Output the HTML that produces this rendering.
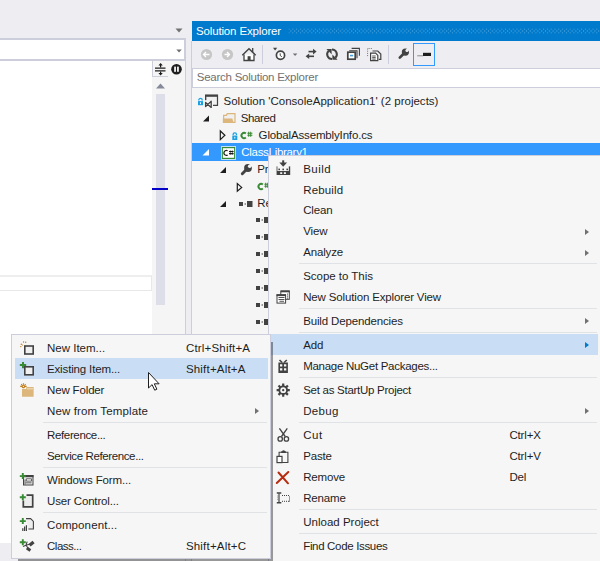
<!DOCTYPE html>
<html><head><meta charset="utf-8">
<style>
*{margin:0;padding:0;box-sizing:border-box}
html,body{width:600px;height:561px;overflow:hidden;background:#EEEEF2;font-family:"Liberation Sans",sans-serif;font-size:11.5px;color:#1E1E1E;letter-spacing:-0.15px}
body{position:relative}
.a{position:absolute}
.t{position:absolute;white-space:pre;line-height:14px}
svg{position:absolute;overflow:visible}
.menu{position:absolute;background:#F6F6F6;border:1px solid #CCCEDB;padding-top:1.56px}
.it{position:relative;height:20.97px}
.it.hl:before{content:"";position:absolute;left:3px;right:2px;top:0;bottom:0;background:#C9DEF5}
.it .tx{position:absolute;top:0;white-space:pre;line-height:22px}
.rmn .it.hl:before{left:1px}
.tx{margin-left:0.5px}
.sep{position:relative;height:2.96px}
.it.hl .arr{border-left-color:#007ACC}
.sep:after{content:"";position:absolute;top:1px;left:var(--sl);right:var(--sr);height:1px;background:#E0E3E6}
.arr{position:absolute;width:0;height:0;border-top:3.3px solid transparent;border-bottom:3.3px solid transparent;border-left:4.5px solid #717171}
</style></head><body>

<!-- LEFT PANEL -->
<div class="a" style="left:0;top:38px;width:185px;height:23px;background:#fff;border-top:2px solid #CCCEDB;border-bottom:2px solid #CCCEDB;border-right:1px solid #CCCEDB"></div>
<div class="a" style="left:0;top:61px;width:152px;height:482px;background:#fff"></div>
<div class="a" style="left:152px;top:61px;width:33px;height:482px;background:#F5F5F5"></div>
<div class="a" style="left:185px;top:38px;width:1px;height:523px;background:#CCCEDB"></div>
<!-- top dropdown arrows -->
<svg style="left:0;top:0" width="1" height="1"><path d="M175.5 28.5h7l-3.5 4z" fill="#717171"/><path d="M176.3 49.5h5.5l-2.75 3z" fill="#717171"/></svg>
<!-- split button box -->
<div class="a" style="left:152px;top:61px;width:16px;height:16px;border-left:1px solid #CCCEDB;border-bottom:1px solid #CCCEDB;background:#F5F5F5"></div>
<svg style="left:0;top:0" width="1" height="1">
 <path d="M155 68.2h10.5M155 70.8h10.5" stroke="#1E1E1E" stroke-width="1.2"/>
 <path d="M160.6 64v3.5M160.6 71.5v3" stroke="#1E1E1E" stroke-width="1.2"/>
 <path d="M158.4 65.5l2.2-2.5 2.2 2.5zM158.4 73l2.2 2.5 2.2-2.5z" fill="#1E1E1E"/>
 <circle cx="176.5" cy="69.2" r="5.3" fill="#1E1E1E"/>
 <rect x="174.2" y="66.6" width="1.7" height="5.2" fill="#fff"/><rect x="177.1" y="66.6" width="1.7" height="5.2" fill="#fff"/>
 <path d="M156 88.5l4.5-5 4.5 5z" fill="#868999"/>
</svg>
<!-- scroll track -->
<div class="a" style="left:156px;top:94px;width:9px;height:211px;background:#DDDEE7"></div>
<div class="a" style="left:152px;top:188px;width:16px;height:2px;background:#0000C8"></div>
<!-- faint box -->
<div class="a" style="left:0;top:275px;width:152px;height:15.5px;border:1px solid #E8E8E8;border-top:2px solid #EEEEEE;border-left:none"></div>

<!-- SOLUTION EXPLORER -->
<div class="a" style="left:191px;top:41px;width:1px;height:520px;background:#CCCEDB"></div>
<div class="a" style="left:192px;top:21px;width:408px;height:20px;background:#007ACC"></div>
<svg style="left:0;top:0" width="1" height="1">
 <defs><pattern id="dots" x="288.5" y="28.5" width="3.8" height="4" patternUnits="userSpaceOnUse">
  <rect x="0" y="0" width="1" height="1" fill="#fff" opacity="0.4"/><rect x="1.9" y="2" width="1" height="1" fill="#fff" opacity="0.4"/>
 </pattern></defs>
 <rect x="288.5" y="28.5" width="312" height="5" fill="url(#dots)"/>
</svg>
<div class="t" style="left:196px;top:24px;color:#fff">Solution Explorer</div>
<!-- search box -->
<div class="a" style="left:192px;top:68px;width:408px;height:20px;background:#fff;border:1px solid #CCCEDB;border-right:none"></div>
<div class="t" style="left:196.8px;top:70px;color:#717171;letter-spacing:-0.25px">Search Solution Explorer</div>
<!-- tree bg -->
<div class="a" style="left:192px;top:88px;width:408px;height:473px;background:#F5F5F5"></div>
<div class="a" style="left:192px;top:143px;width:408px;height:18px;background:#3399FF"></div>

<svg style="left:0;top:0" width="600" height="561">
 <!-- solution -->
 <path d="M198.8 100.6v-0.5a1.7 1.7 0 0 1 3.4 0v0.5" stroke="#1BA1E2" stroke-width="1.3" fill="none"/>
 <rect x="198" y="101.1" width="5" height="4.1" fill="#1BA1E2"/><rect x="200.05" y="102.3" width="0.9" height="1.8" fill="#fff"/>
 <path d="M205.6 101V95.4h11.9v10h-4.5" stroke="#424242" stroke-width="1.2" fill="#F0F0F0"/>
 <rect x="205" y="94.6" width="13" height="2.2" fill="#424242"/>
 <rect x="204.6" y="100.2" width="8.4" height="8" fill="#F5F5F5"/><path d="M205.6 102.4V106.6L211.2 101.2V107.4Z" stroke="#424242" stroke-width="1.3" fill="none" stroke-linejoin="round"/><path d="M205.6 97v3" stroke="#424242" stroke-width="1.2"/>
 <!-- shared -->
 <path d="M203 121.5h6v-6z" fill="#1E1E1E"/>
 <path d="M223.6 122.4V115.3H226.3L227.3 113.6H235V122.4Z" stroke="#DCB67A" stroke-width="1.2" fill="#F0EFF1"/>
 <path d="M222.8 118.4H232.3L233.6 122.9H222.8Z" fill="#DCB67A"/>
 <!-- global --><path d="M245.84 133.57A2.6 2.6 0 1 0 245.84 137.43" stroke="#388A34" stroke-width="1.9" fill="none"/><path d="M248.70 131.80v5M250.70 131.80v5M247.39999999999998 133.30h5M247.39999999999998 135.30h5" stroke="#388A34" stroke-width="1.05"/>
 <path d="M220.3 131v8.6l4.6-4.3z" stroke="#1E1E1E" stroke-width="1.2" fill="none"/>
 <path d="M233.1 135v-0.5a1.7 1.7 0 0 1 3.4 0v0.5" stroke="#1BA1E2" stroke-width="1.3" fill="none"/>
 <rect x="232.3" y="135.5" width="5" height="4.5" fill="#1BA1E2"/><rect x="234.35" y="136.8" width="0.9" height="1.8" fill="#fff"/>
 <!-- classlibrary -->
 <path d="M202.5 155.5h6.5v-6.5z" fill="#fff"/>
 <rect x="221" y="146.3" width="15" height="13.4" fill="#fff"/>
 <rect x="222.3" y="147.6" width="12.4" height="10.8" stroke="#388A34" stroke-width="1.2" fill="#fff"/><path d="M227.6 150.7A2.5 2.5 0 1 0 227.6 155.1" stroke="#1E1E1E" stroke-width="1.3" fill="none"/><path d="M229 151.5h4.6M229 153.6h4.6" stroke="#1E1E1E" stroke-width="1.2"/><path d="M230.3 150.4v4.4M232.3 150.4v4.4" stroke="#1E1E1E" stroke-width="0.7"/>
 <!-- properties -->
 <path d="M220 173h6v-6z" fill="#1E1E1E"/>
  <path d="M247.2 168.8l-4.9 4.9" stroke="#424242" stroke-width="2.9" stroke-linecap="round"/>
 <circle cx="248" cy="168" r="3.9" fill="#424242"/>
 <circle cx="249.7" cy="166.3" r="1.8" fill="#F5F5F5"/>
 <path d="M249.7 166.3l3.5 -3.5" stroke="#F5F5F5" stroke-width="2.6"/>
 <!-- assemblyinfo --><path d="M262.84 184.57A2.6 2.6 0 1 0 262.84 188.43" stroke="#388A34" stroke-width="1.9" fill="none"/><path d="M265.70 182.80v5M267.70 182.80v5M264.4 184.30h5M264.4 186.30h5" stroke="#388A34" stroke-width="1.05"/>
 <path d="M237.3 183.6v7.6l4.4-3.8z" stroke="#1E1E1E" stroke-width="1.2" fill="none"/>
 <!-- references -->
 <path d="M220 207h6v-6z" fill="#1E1E1E"/>
 <rect x="239" y="202" width="4" height="4" fill="#424242"/><rect x="244.5" y="203.5" width="1.5" height="1" fill="#424242"/><rect x="247" y="201" width="5.5" height="6" fill="#424242"/>
 <rect x="256" y="218" width="4" height="4" fill="#424242"/><rect x="261.5" y="219.5" width="1.5" height="1" fill="#424242"/><rect x="264" y="217" width="5" height="6" fill="#424242"/><rect x="256" y="235" width="4" height="4" fill="#424242"/><rect x="261.5" y="236.5" width="1.5" height="1" fill="#424242"/><rect x="264" y="234" width="5" height="6" fill="#424242"/><rect x="256" y="252" width="4" height="4" fill="#424242"/><rect x="261.5" y="253.5" width="1.5" height="1" fill="#424242"/><rect x="264" y="251" width="5" height="6" fill="#424242"/><rect x="256" y="269" width="4" height="4" fill="#424242"/><rect x="261.5" y="270.5" width="1.5" height="1" fill="#424242"/><rect x="264" y="268" width="5" height="6" fill="#424242"/><rect x="256" y="286" width="4" height="4" fill="#424242"/><rect x="261.5" y="287.5" width="1.5" height="1" fill="#424242"/><rect x="264" y="285" width="5" height="6" fill="#424242"/><rect x="256" y="303" width="4" height="4" fill="#424242"/><rect x="261.5" y="304.5" width="1.5" height="1" fill="#424242"/><rect x="264" y="302" width="5" height="6" fill="#424242"/><rect x="256" y="320" width="4" height="4" fill="#424242"/><rect x="261.5" y="321.5" width="1.5" height="1" fill="#424242"/><rect x="264" y="319" width="5" height="6" fill="#424242"/>
</svg>
<div class="t" style="left:223.5px;top:94px;letter-spacing:0.005px">Solution 'ConsoleApplication1' (2 projects)</div>
<div class="t" style="left:240.8px;top:111px;letter-spacing:-0.4px">Shared</div>
<div class="t" style="left:258.6px;top:128px">GlobalAssemblyInfo.cs</div>
<div class="t" style="left:241.3px;top:145px;color:#fff;letter-spacing:-0.3px">ClassLibrary1</div>
<div class="t" style="left:257.3px;top:162px">Properties</div>
<div class="t" style="left:257.3px;top:196px">References</div>


<svg style="left:0;top:0" width="600" height="561">
 <circle cx="206.5" cy="54.5" r="5.6" fill="#C6C6C6"/>
 <path d="M209.5 54.5h-5.5M206 52l-2.5 2.5 2.5 2.5" stroke="#fff" stroke-width="1.3" fill="none"/>
 <circle cx="227.5" cy="54.5" r="5.6" fill="#C6C6C6"/>
 <path d="M224.5 54.5h5.5M227 52l2.5 2.5-2.5 2.5" stroke="#fff" stroke-width="1.3" fill="none"/>
 <path d="M244 54.5v6h10v-6" stroke="#424242" stroke-width="1.3" fill="#fff"/>
 <path d="M242.3 55.3l6.7-6.6 6.7 6.6" stroke="#424242" stroke-width="1.4" fill="none"/>
 <path d="M252.7 48v4" stroke="#424242" stroke-width="1.3"/>
 <rect x="247.6" y="56.2" width="3" height="4.8" fill="#424242"/>
 <rect x="262" y="45" width="1" height="19" fill="#CCCEDB"/>
 <circle cx="280.5" cy="55.2" r="4.1" stroke="#424242" stroke-width="1.7" fill="#fff"/>
 <path d="M280.2 53.3v2.2l1.6 1.2" stroke="#424242" stroke-width="1" fill="none"/>
 <path d="M273 47.8h4.2l-2.1 2.6z" fill="#424242"/>
 <path d="M292.8 53.5h4.6l-2.3 2.6z" fill="#717171"/>
 <path d="M308.5 51.6h6.5" stroke="#424242" stroke-width="1.6"/>
 <path d="M313 48.8l3.6 2.8-3.6 2.8z" fill="#424242"/>
 <path d="M307.5 56.3h6.5" stroke="#424242" stroke-width="1.6"/>
 <path d="M309.2 53.5l-3.6 2.8 3.6 2.8z" fill="#424242"/>
  <path d="M332 59.1A4.8 4.8 0 0 1 328.6 50.9" stroke="#424242" stroke-width="2" fill="none"/>
 <path d="M326.4 49h5.2v5.2z" fill="#424242"/>
 <path d="M332 49.5A4.8 4.8 0 0 1 335.4 57.7" stroke="#424242" stroke-width="2" fill="none"/>
 <path d="M337.6 59.7h-5.2v-5.2z" fill="#424242"/>
<path d="M351.6 48.4h7.8v7.4" stroke="#424242" stroke-width="1.1" fill="none"/>
 <path d="M349.2 50.8h7.8v7.4" stroke="#424242" stroke-width="1.1" fill="none"/>
 <rect x="347.8" y="52.2" width="7.4" height="7" stroke="#424242" stroke-width="1.7" fill="#fff"/>
 <rect x="350" y="54.8" width="3.2" height="1.6" fill="#4A9BD9"/>
 <path d="M367.6 48.5v8" stroke="#717171" stroke-width="1" stroke-dasharray="1 1.2"/>
 <path d="M368.6 48.5h4" stroke="#717171" stroke-width="1" stroke-dasharray="1 1.2"/>
 <path d="M372.5 51h5.3l3 3v5.4h-2" stroke="#424242" stroke-width="1.2" fill="none"/>
 <path d="M370.6 53.2h5l2.2 2.2v5.3h-7.2z" stroke="#424242" stroke-width="1.2" fill="#fff"/>
 <path d="M372.2 56h3.5M372.2 57.6h3.5M372.2 59.1h3.5" stroke="#424242" stroke-width="0.9"/>
 <rect x="388" y="45" width="1" height="19" fill="#CCCEDB"/>
  <path d="M404.6 52.8l-4.8 4.8" stroke="#424242" stroke-width="2.7" stroke-linecap="round"/>
 <circle cx="405.4" cy="52.1" r="3.6" fill="#424242"/>
 <circle cx="407" cy="50.5" r="1.6" fill="#EEEEF2"/>
 <path d="M407 50.5l3 -3" stroke="#EEEEF2" stroke-width="2.4"/>
<rect x="413.5" y="43.5" width="21" height="22" stroke="#3399FF" stroke-width="1" fill="#EEEEF2"/>
 <rect x="417.2" y="55.3" width="6" height="1" fill="#8A8A8A"/>
 <rect x="423" y="52.8" width="8" height="3.2" fill="#1E1E1E"/>
</svg>

<div class="menu rmn" style="left:268px;top:155px;width:333px;height:420px;--sl:30px;--sr:3px">
<div class="it"><span class="tx" style="left:33.7px;letter-spacing:0.45px">Build</span></div>
<div class="it"><span class="tx" style="left:33.7px;letter-spacing:0.15px">Rebuild</span></div>
<div class="it"><span class="tx" style="left:33.7px">Clean</span></div>
<div class="it"><span class="tx" style="left:33.7px">View</span><span class="arr" style="left:316.4px;top:8.2px"></span></div>
<div class="it"><span class="tx" style="left:33.7px">Analyze</span><span class="arr" style="left:316.4px;top:8.2px"></span></div>
<div class="sep"></div>
<div class="it"><span class="tx" style="left:33.7px;letter-spacing:-0.03px">Scope to This</span></div>
<div class="it"><span class="tx" style="left:33.7px">New Solution Explorer View</span></div>
<div class="sep"></div>
<div class="it"><span class="tx" style="left:33.7px">Build Dependencies</span><span class="arr" style="left:316.4px;top:8.2px"></span></div>
<div class="sep"></div>
<div class="it hl"><span class="tx" style="left:33.7px">Add</span><span class="arr" style="left:316.4px;top:8.2px"></span></div>
<div class="it"><span class="tx" style="left:33.7px;letter-spacing:-0.28px">Manage NuGet Packages...</span></div>
<div class="sep"></div>
<div class="it"><span class="tx" style="left:33.7px;letter-spacing:-0.27px">Set as StartUp Project</span></div>
<div class="it"><span class="tx" style="left:33.7px;letter-spacing:0.32px">Debug</span><span class="arr" style="left:316.4px;top:8.2px"></span></div>
<div class="sep"></div>
<div class="it"><span class="tx" style="left:33.7px;letter-spacing:0.6px">Cut</span><span class="tx" style="left:239.9px">Ctrl+X</span></div>
<div class="it"><span class="tx" style="left:33.7px">Paste</span><span class="tx" style="left:239.9px">Ctrl+V</span></div>
<div class="it"><span class="tx" style="left:33.7px">Remove</span><span class="tx" style="left:239.9px">Del</span></div>
<div class="it"><span class="tx" style="left:33.7px">Rename</span></div>
<div class="sep"></div>
<div class="it"><span class="tx" style="left:33.7px;letter-spacing:0.01px">Unload Project</span></div>
<div class="sep"></div>
<div class="it"><span class="tx" style="left:33.7px;letter-spacing:-0.33px">Find Code Issues</span></div>
</div>
<svg style="left:0;top:0" width="600" height="561">
 <!-- build -->
 <path d="M283.2 160.3v3.5" stroke="#424242" stroke-width="2"/>
 <path d="M279.3 162.6h7.8l-3.9 4.2z" fill="#424242"/>
 <rect x="276.3" y="166.4" width="1.4" height="8.6" fill="#8C8C8C"/>
 <rect x="288.8" y="166.4" width="1.4" height="8.6" fill="#424242"/>
 <rect x="278.4" y="168.6" width="1.6" height="1.6" fill="#424242"/><rect x="282.4" y="168.6" width="1.6" height="1.6" fill="#424242"/><rect x="286.4" y="168.6" width="1.6" height="1.6" fill="#424242"/>
 <path d="M277 171h13v4h-13z M280.2 172.3v1.8h2v-1.8z M283.9 172.3v1.8h2v-1.8z" fill="#424242" fill-rule="evenodd"/>
 <!-- new SE view -->
 <rect x="280.8" y="291" width="8.5" height="8.3" stroke="#424242" stroke-width="1" fill="#fff"/>
 <rect x="280.8" y="290.5" width="8.8" height="1.8" fill="#424242"/>
 <rect x="287" y="293.6" width="1" height="1" fill="#424242"/><rect x="287" y="295.6" width="1" height="1" fill="#424242"/><rect x="287" y="297.6" width="1" height="1" fill="#424242"/>
 <rect x="277" y="294.8" width="8.6" height="8.3" stroke="#424242" stroke-width="1" fill="#fff"/>
 <rect x="276.5" y="294.3" width="9.5" height="1.8" fill="#424242"/>
 <path d="M278.5 297.5h6M278.5 299.5h6M279.5 301.3h4.5" stroke="#424242" stroke-width="0.9"/>
 <!-- nuget -->
 <path d="M278.4 362.5h9.5v10.5h-9.5z M280 364.3v2.2h2.3v-2.2z M284 364.3v2.2h2.3v-2.2z M280 368.2v2.2h2.3v-2.2z M284 368.2v2.2h2.3v-2.2z" fill="#424242" fill-rule="evenodd"/>
 <path d="M279.5 360l2.7 2.5M286.8 360l-2.7 2.5" stroke="#424242" stroke-width="1.6"/>
 <!-- gear -->
 <g transform="translate(283.2 390.2)">
  <path d="M0 -6.6v13.2M-6.6 0h13.2M-4.7 -4.7l9.4 9.4M4.7 -4.7l-9.4 9.4" stroke="#424242" stroke-width="2.2"/>
  <circle r="4.8" fill="#424242"/><circle r="2.9" fill="#F6F6F6"/><circle r="1.15" fill="#424242"/>
 </g>
 <!-- cut -->
 <path d="M279.4 428.3l5.8 8.2M287.3 428.3l-5.8 8.2" stroke="#424242" stroke-width="1.3"/>
 <circle cx="280.2" cy="438.9" r="2.2" stroke="#424242" stroke-width="1.3" fill="none"/>
 <circle cx="286.4" cy="438.9" r="2.2" stroke="#424242" stroke-width="1.3" fill="none"/>
 <!-- paste -->
  <path d="M279.1 456v-3.7h8.8v10.2h-5.8" stroke="#424242" stroke-width="1.1" fill="none"/>
 <path d="M281.2 452.9v-1.6h0.9a1.5 1.5 0 0 1 2.9 0h0.9v1.6z" fill="#424242"/>
 <rect x="277" y="456.4" width="5" height="6.2" stroke="#424242" stroke-width="1.2" fill="#fff"/>
 <!-- remove -->
 <path d="M276.8 483l11.5-11M278.5 472.5l9.5 10.8" stroke="#B72B0E" stroke-width="2" stroke-linecap="round"/>
 <!-- rename -->
 <path d="M279 493.5v9" stroke="#424242" stroke-width="1.2"/>
 <path d="M276.8 493h4.5M276.8 502.8h4.5" stroke="#424242" stroke-width="1.4"/>
 <path d="M282 495.5h8M289.5 496.5v5M282 501.3h8" stroke="#424242" stroke-width="1" stroke-dasharray="1 1"/>
 <path d="M277 496h1M277 497.8h1M277 499.6h1" stroke="#8C8C8C" stroke-width="0.8"/>
</svg>

<div class="a" style="left:18px;top:342px;width:255px;height:220px;background:rgba(0,0,0,0.38);filter:blur(0.4px)"></div>
<div class="menu" style="left:11px;top:334.4px;width:260px;height:225px;--sl:30.8px;--sr:3px">
<div class="it"><span class="tx" style="left:34.5px;letter-spacing:0.0px">New Item...</span><span class="tx" style="left:173.4px;letter-spacing:0.19px">Ctrl+Shift+A</span></div>
<div class="it hl"><span class="tx" style="left:34.5px">Existing Item...</span><span class="tx" style="left:173.4px;letter-spacing:0.2px">Shift+Alt+A</span></div>
<div class="it"><span class="tx" style="left:34.5px">New Folder</span></div>
<div class="it"><span class="tx" style="left:34.5px;letter-spacing:0.13px">New from Template</span><span class="arr" style="left:243px;top:8.2px"></span></div>
<div class="sep"></div>
<div class="it"><span class="tx" style="left:34.5px;letter-spacing:-0.35px">Reference...</span></div>
<div class="it"><span class="tx" style="left:34.5px;letter-spacing:-0.38px">Service Reference...</span></div>
<div class="sep"></div>
<div class="it"><span class="tx" style="left:34.5px">Windows Form...</span></div>
<div class="it"><span class="tx" style="left:34.5px">User Control...</span></div>
<div class="sep"></div>
<div class="it"><span class="tx" style="left:34.5px;letter-spacing:0.11px">Component...</span></div>
<div class="it"><span class="tx" style="left:34.5px;letter-spacing:-0.48px">Class...</span><span class="tx" style="left:173.4px;letter-spacing:0.2px">Shift+Alt+C</span></div>
</div>
<svg style="left:0;top:0" width="600" height="561">
 <!-- new item -->
 <rect x="24.8" y="346" width="8.4" height="8" stroke="#424242" stroke-width="1.6" fill="#F0F0F0"/>
 <circle cx="21.3" cy="344.2" r="0.7" fill="#C27D1A"/><circle cx="23.5" cy="342" r="0.7" fill="#C27D1A"/><circle cx="25.7" cy="342.3" r="0.7" fill="#C27D1A"/><circle cx="20.8" cy="346.6" r="0.7" fill="#C27D1A"/><circle cx="22.5" cy="345" r="0.6" fill="#C27D1A"/>
 <!-- existing item -->
 <rect x="24.8" y="366.8" width="8.4" height="8" stroke="#424242" stroke-width="1.6" fill="#F0F0F0"/>
 <path d="M19.8 365.1h6.4M23 361.9v6.4" stroke="#388A34" stroke-width="2"/>
 <!-- new folder -->
 <path d="M22 389h11.6v7.8h-11.6z" fill="#DCB67A"/>
 <path d="M26.2 387h7.4v2h-7.4z" fill="#DCB67A"/>
 <rect x="27" y="388.4" width="6" height="0.9" fill="#F3E6CC"/>
 <g transform="translate(23.4 386.4)" stroke="#C27D1A" stroke-width="1.1">
  <path d="M-3.2 0h6.4M0 -3.2v1.5M-2.2 -2.2l0.8 0.8M2.2 -2.2l-0.8 0.8"/>
  <circle r="1.2" fill="#F6F6F6"/>
 </g>
 <!-- windows form -->
 <rect x="23.5" y="475.5" width="9.5" height="9.5" stroke="#424242" stroke-width="1" fill="#E8E8E8"/>
 <rect x="24" y="475" width="9.5" height="2.2" fill="#424242"/>
 <path d="M26.3 478.8h5.2v2.3h-5.2z" stroke="#424242" stroke-width="0.8" fill="#fff"/>
 <path d="M25.5 482.8h6M25 479.5v5" stroke="#424242" stroke-width="0.8"/>
 <path d="M19.8 476.1h6M22.8 473.1v6" stroke="#388A34" stroke-width="1.9"/>
 <!-- user control -->
 <path d="M26.5 495.2h6.2v11.6h-9.4v-6.2" stroke="#424242" stroke-width="1.7" fill="#EDEDED"/>
 <path d="M19.8 497.2h6M22.8 494.2v6" stroke="#388A34" stroke-width="1.9"/>
 <!-- component -->
 <path d="M26 518.6h4.6l2.8 2.8v7.6h-5" stroke="#424242" stroke-width="1.1" fill="#EDEDED"/>
 <rect x="22.2" y="528.2" width="1.2" height="2.8" fill="#424242"/><rect x="24" y="526.5" width="1.2" height="4.5" fill="#424242"/><rect x="25.8" y="525.2" width="1.2" height="5.8" fill="#424242"/>
 <path d="M19.8 521.1h6M22.8 518.1v6" stroke="#388A34" stroke-width="1.9"/>
 <!-- class -->
  <path d="M26 545.2L30.5 544M26 545.2L28.3 548.5M26 545.2L23 546.6M26 545.2L27.2 541.6" stroke="#424242" stroke-width="1.1"/>
 <rect x="-2.6" y="-1.6" width="5.2" height="3.2" transform="translate(31.6 543.6) rotate(-40)" fill="#424242"/>
 <rect x="-2.2" y="-1.5" width="4.4" height="3" transform="translate(28.6 549.3) rotate(35)" fill="#424242"/>
<path d="M19.8 542.3h6M22.8 539.3v6" stroke="#388A34" stroke-width="1.9"/>
 <!-- cursor -->
 <path d="M148.5 372.5v15.5l3.6-3.4l2.6 5.6l2.2-1l-2.6-5.4h4.8z" fill="#fff" stroke="#1E1E1E" stroke-width="1" stroke-linejoin="round"/>
</svg>

</body></html>
